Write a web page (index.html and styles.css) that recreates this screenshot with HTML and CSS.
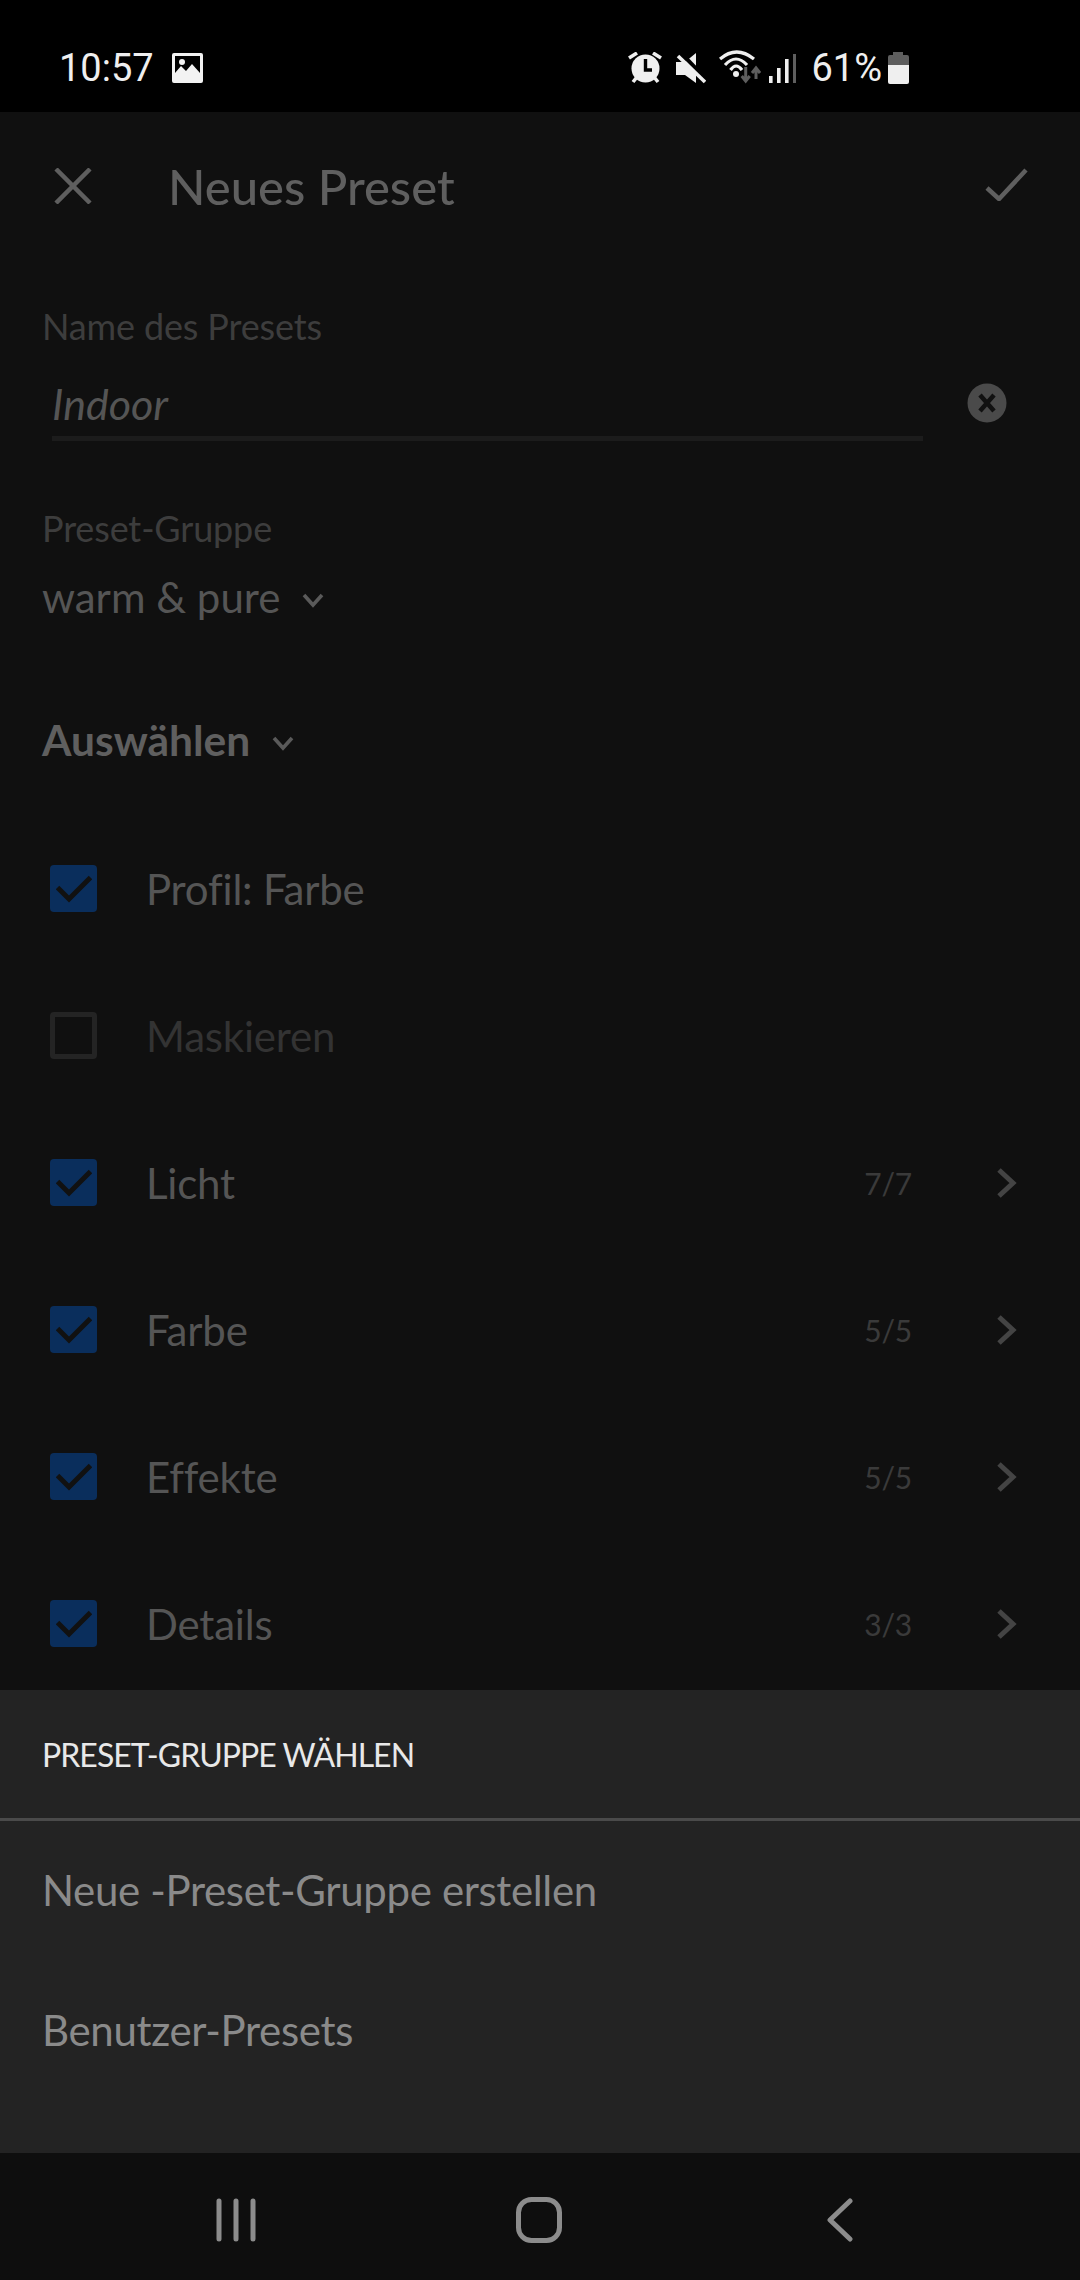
FILE: index.html
```html
<!DOCTYPE html>
<html lang="de">
<head>
    <meta charset="UTF-8">
    <meta name="viewport" content="width=device-width, initial-scale=1.0">
    <title>Neues Preset</title>
    <link rel="stylesheet" href="styles.css">
</head>
<body>
    <div class="phone">
        <div class="status-bar">
            <span class="clock">10:57</span>
            <svg class="gallery-icon" viewBox="0 0 31 30"><path fill="#f2f2f2" fill-rule="evenodd" d="M2 0h27a2 2 0 0 1 2 2v26a2 2 0 0 1-2 2H2a2 2 0 0 1-2-2V2a2 2 0 0 1 2-2zM3 3v17l6-7 5 5 6-7 8 9V3z"/><circle cx="10" cy="9" r="3" fill="#f2f2f2"/></svg>
            <div class="status-right">
                <svg class="alarm-icon" viewBox="0 0 34 32"><circle cx="17.5" cy="16.5" r="14" fill="#efefef"/><path d="M17.5 7v11H24" fill="none" stroke="#000" stroke-width="3.4"/><path d="M1 6l8-5M33 6l-8-5M5 30l4-5M30 30l-4-5" stroke="#efefef" stroke-width="3.6" fill="none"/></svg>
                <svg class="mute-icon" viewBox="0 0 30 31"><path fill="#efefef" d="M0 9h9L20 0v30L9 22H0z"/><path d="M5 0l26 27" stroke="#000" stroke-width="4"/><path d="M2 3l27 26" stroke="#efefef" stroke-width="3.6"/></svg>
                <svg class="wifi-icon" viewBox="0 0 42 36"><path d="M1 9Q17.5-5 35 9M6 15Q17 3 28 15M11.5 20Q17 12 23 20" fill="none" stroke="#efefef" stroke-width="3.2"/><circle cx="17" cy="24" r="3" fill="#efefef"/><path d="M26.7 17v14M22.7 26l4 5 4-5" fill="none" stroke="#5e5e5e" stroke-width="3"/><path d="M37 29V19M33 23l4-5 4 5" fill="none" stroke="#5e5e5e" stroke-width="3"/></svg>
                <svg class="signal-icon" viewBox="0 0 28 29"><rect x="1" y="22" width="3.6" height="7" fill="#efefef"/><rect x="9" y="14" width="3.6" height="15" fill="#efefef"/><rect x="17" y="5" width="3.6" height="24" fill="#efefef"/><rect x="25" y="0" width="3" height="29" fill="#5e5e5e"/></svg>
                <span class="battery-text">61%</span>
                <svg class="battery-icon" viewBox="0 0 21 32"><path fill="#5e5e5e" d="M5 0h10v3h4a2 2 0 0 1 2 2v8H0V5a2 2 0 0 1 2-2h3z"/><path fill="#efefef" d="M0 13h21v17a2 2 0 0 1-2 2H2a2 2 0 0 1-2-2z"/></svg>
            </div>
        </div>

        <div class="editor">
            <header class="title-bar">
                <svg class="close-icon" viewBox="0 0 38 36"><path d="M2 1l34 34M36 1L2 35" fill="none" stroke="#5f5f5f" stroke-width="4.5"/></svg>
                <h1>Neues Preset</h1>
                <svg class="save-icon" viewBox="0 0 43 33"><path d="M2 20l12 11L41 2" fill="none" stroke="#5f5f5f" stroke-width="4.5"/></svg>
            </header>

            <div class="field-label name-label">Name des Presets</div>
            <div class="name-row">
                <div class="name-input">Indoor</div>
                <svg class="clear-icon" viewBox="0 0 40 40"><circle cx="20" cy="20" r="19.5" fill="#4a4a4a"/><path d="M13 12l14 16M27 12L13 28" stroke="#111" stroke-width="4.5"/></svg>
            </div>

            <div class="field-label group-label">Preset-Gruppe</div>
            <div class="group-value">warm &amp; pure <svg class="chevron-down" viewBox="0 0 22 16"><path d="M2 3l9 10 9-10" fill="none" stroke="#5a5a5a" stroke-width="3.6"/></svg></div>

            <div class="select-all">Auswählen <svg class="chevron-down" viewBox="0 0 22 16"><path d="M2 3l9 10 9-10" fill="none" stroke="#5a5a5a" stroke-width="3.6"/></svg></div>

            <ul class="settings">
                <li class="setting">
                    <span class="box checked"><svg viewBox="0 0 36 28"><path d="M1.5 12.5L13 24 34.5 2.5" fill="none" stroke="#111" stroke-width="5"/></svg></span>
                    <span class="setting-name">Profil: Farbe</span>
                </li>
                <li class="setting off">
                    <span class="box"></span>
                    <span class="setting-name">Maskieren</span>
                </li>
                <li class="setting">
                    <span class="box checked"><svg viewBox="0 0 36 28"><path d="M1.5 12.5L13 24 34.5 2.5" fill="none" stroke="#111" stroke-width="5"/></svg></span>
                    <span class="setting-name">Licht</span>
                    <span class="count">7/7</span>
                    <svg class="chevron-right" viewBox="0 0 20 30"><path d="M2 2l14 13L2 28" fill="none" stroke="#444" stroke-width="5"/></svg>
                </li>
                <li class="setting">
                    <span class="box checked"><svg viewBox="0 0 36 28"><path d="M1.5 12.5L13 24 34.5 2.5" fill="none" stroke="#111" stroke-width="5"/></svg></span>
                    <span class="setting-name">Farbe</span>
                    <span class="count">5/5</span>
                    <svg class="chevron-right" viewBox="0 0 20 30"><path d="M2 2l14 13L2 28" fill="none" stroke="#444" stroke-width="5"/></svg>
                </li>
                <li class="setting">
                    <span class="box checked"><svg viewBox="0 0 36 28"><path d="M1.5 12.5L13 24 34.5 2.5" fill="none" stroke="#111" stroke-width="5"/></svg></span>
                    <span class="setting-name">Effekte</span>
                    <span class="count">5/5</span>
                    <svg class="chevron-right" viewBox="0 0 20 30"><path d="M2 2l14 13L2 28" fill="none" stroke="#444" stroke-width="5"/></svg>
                </li>
                <li class="setting">
                    <span class="box checked"><svg viewBox="0 0 36 28"><path d="M1.5 12.5L13 24 34.5 2.5" fill="none" stroke="#111" stroke-width="5"/></svg></span>
                    <span class="setting-name">Details</span>
                    <span class="count">3/3</span>
                    <svg class="chevron-right" viewBox="0 0 20 30"><path d="M2 2l14 13L2 28" fill="none" stroke="#444" stroke-width="5"/></svg>
                </li>
            </ul>
        </div>

        <section class="sheet">
            <div class="sheet-title">PRESET-GRUPPE WÄHLEN</div>
            <div class="sheet-item">Neue -Preset-Gruppe erstellen</div>
            <div class="sheet-item">Benutzer-Presets</div>
        </section>

        <nav class="nav-bar">
            <svg class="nav-recent" viewBox="0 0 40 44"><path d="M3 3v38M20 3v38M37 3v38" stroke="#8c8c8c" stroke-width="5" stroke-linecap="round"/></svg>
            <svg class="nav-home" viewBox="0 0 46 46"><rect x="2.5" y="2.5" width="41" height="41" rx="13" fill="none" stroke="#8c8c8c" stroke-width="5"/></svg>
            <svg class="nav-back" viewBox="0 0 26 44"><path d="M23 3L3 22l20 19" fill="none" stroke="#8c8c8c" stroke-width="5" stroke-linecap="round" stroke-linejoin="round"/></svg>
        </nav>
    </div>
</body>
</html>
```
FILE: styles.css
```css
* {
    box-sizing: border-box;
}
body {
    margin: 0;
    background-color: #000;
    font-family: Lato, "Noto Sans", sans-serif;
    font-variant-ligatures: none;
}
.phone {
    width: 1080px;
    height: 2280px;
    display: flex;
    flex-direction: column;
    overflow: hidden;
}

/* status bar */
.status-bar {
    height: 112px;
    flex-shrink: 0;
    display: flex;
    align-items: center;
    padding: 24px 171px 0 59px;
    background-color: #000;
    color: #efefef;
    font-family: Roboto, sans-serif;
    font-size: 38px;
}
.clock {
    margin-right: 18px;
}
.gallery-icon {
    width: 31px;
    height: 30px;
}
.status-right {
    margin-left: auto;
    display: flex;
    align-items: center;
}
.alarm-icon {
    width: 34px;
    height: 32px;
    margin-right: 14px;
}
.mute-icon {
    width: 30px;
    height: 31px;
    margin-right: 13px;
}
.wifi-icon {
    width: 42px;
    height: 36px;
    margin-right: 7px;
}
.signal-icon {
    width: 28px;
    height: 29px;
    margin-right: 15px;
}
.battery-text {
    margin-right: 6px;
}
.battery-icon {
    width: 21px;
    height: 32px;
}

/* editor behind the sheet */
.editor {
    flex: 1;
    min-height: 0;
    padding: 0 0 0 42px;
    background-color: #101010;
}
.title-bar {
    height: 148px;
    display: flex;
    align-items: center;
    padding-right: 52px;
}
.close-icon {
    width: 38px;
    height: 36px;
    margin-left: 12px;
    margin-right: 76px;
}
h1 {
    margin: 0;
    color: #5f5f5f;
    font-size: 49px;
    font-weight: 500;
}
.save-icon {
    width: 43px;
    height: 33px;
    margin-left: auto;
    margin-bottom: 3px;
}
.field-label {
    color: #3d3d3d;
    font-size: 36px;
    letter-spacing: -0.15px;
    line-height: 42px;
}
.name-label {
    margin-top: 45px;
}
.name-row {
    display: flex;
    align-items: center;
    margin-top: 26px;
}
.name-input {
    width: 871px;
    height: 68px;
    margin-left: 10px;
    border-bottom: 5px solid #1c1c1c;
    color: #555;
    font-size: 43px;
    font-style: italic;
    line-height: 62px;
}
.clear-icon {
    width: 40px;
    height: 40px;
    margin-left: 44px;
    margin-bottom: 8px;
}
.group-label {
    margin-top: 66px;
}
.group-value {
    display: flex;
    align-items: center;
    margin-top: 22px;
    color: #555;
    font-size: 42px;
    line-height: 52px;
}
.chevron-down {
    width: 22px;
    height: 16px;
    margin-left: 22px;
    margin-top: 6px;
}
.select-all {
    display: flex;
    align-items: center;
    margin-top: 91px;
    color: #5f5f5f;
    font-size: 42.5px;
    font-weight: 700;
    line-height: 52px;
}
.settings {
    margin: 49px 0 0;
    padding: 0;
    list-style: none;
}
.setting {
    height: 147px;
    display: flex;
    align-items: center;
    padding-right: 63px;
    color: #555;
    font-size: 42px;
    letter-spacing: -0.2px;
}
.setting.off {
    color: #333;
}
.box {
    width: 47px;
    height: 47px;
    margin-left: 8px;
    margin-right: 49px;
    display: flex;
    align-items: center;
    justify-content: center;
    border: 5px solid #242424;
    border-radius: 4px;
}
.box.checked {
    border: none;
    background-color: #0a2e5c;
}
.box svg {
    width: 36px;
    height: 28px;
}
.count {
    margin-left: auto;
    margin-right: 85px;
    color: #3a3a3a;
    font-size: 30px;
}
.chevron-right {
    width: 20px;
    height: 30px;
}

/* bottom sheet */
.sheet {
    height: 463px;
    flex-shrink: 0;
    background-color: #232323;
}
.sheet-title {
    height: 131px;
    display: flex;
    align-items: center;
    padding-left: 42px;
    border-bottom: 3px solid #4a4a4a;
    color: #e8e8e8;
    font-size: 32px;
    letter-spacing: -0.95px;
}
.sheet-item {
    height: 140px;
    display: flex;
    align-items: center;
    padding: 0 0 2px 42px;
    color: #8a8a8a;
    font-size: 42px;
    letter-spacing: -0.35px;
}

/* android nav */
.nav-bar {
    height: 127px;
    flex-shrink: 0;
    background-color: #0e0e0e;
    display: flex;
    align-items: center;
    padding: 6px 227px 0 216px;
    justify-content: space-between;
}
.nav-recent {
    width: 40px;
    height: 44px;
}
.nav-home {
    width: 46px;
    height: 46px;
    margin-right: 6px;
}
.nav-back {
    width: 26px;
    height: 44px;
}
```
